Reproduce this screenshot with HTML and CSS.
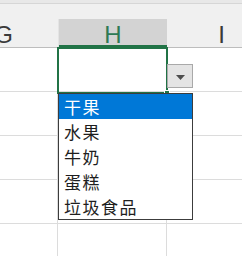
FILE: index.html
```html
<!DOCTYPE html>
<html lang="zh-CN">
<head>
  <meta charset="UTF-8" />
  <meta name="viewport" content="width=device-width, initial-scale=1.0">
  <title>数据验证下拉列表</title>
  <link rel="stylesheet" href="styles.css">
</head>
<body>
  <div class="sheet">
    <div class="top-strip"></div>

    <!-- Column headers -->
    <div class="col-header">
      <div class="col-cell">G</div>
      <div class="col-cell active">H</div>
      <div class="col-cell">I</div>
    </div>

    <!-- Cells -->
    <div class="grid">
      <div class="grid-row"><div class="cell"></div><div class="cell"></div><div class="cell"></div></div>
      <div class="grid-row"><div class="cell"></div><div class="cell"></div><div class="cell"></div></div>
      <div class="grid-row"><div class="cell"></div><div class="cell"></div><div class="cell"></div></div>
      <div class="grid-row"><div class="cell"></div><div class="cell"></div><div class="cell"></div></div>
      <div class="grid-row"><div class="cell"></div><div class="cell"></div><div class="cell"></div></div>
    </div>

    <!-- Active cell + validation dropdown -->
    <div class="selection">
      <span class="fill-handle"></span>
    </div>
    <button class="dropdown-btn" aria-label="open list">
      <svg width="9" height="5" viewBox="0 0 9 5"><path d="M0 0H9L4.5 5Z" fill="#4d4d4d"/></svg>
    </button>
    <ul class="dropdown-list">
      <li class="selected">干果</li>
      <li>水果</li>
      <li>牛奶</li>
      <li>蛋糕</li>
      <li>垃圾食品</li>
    </ul>
  </div>
</body>
</html>
```

FILE: styles.css
```css
:root {
  --header-bg: #f0f0f0;
  --header-active: #d3d3d3;
  --grid-line: #dcdcdc;
  --excel-green: #217346;
  --list-border: #3c3c3c;
  --list-select: #0078d7;
  --text-color: #1e1e1e;
}

* {
  box-sizing: border-box;
  margin: 0;
  padding: 0;
}

body {
  width: 242px;
  height: 256px;
  overflow: hidden;
  background: #ffffff;
  font-family: "Liberation Sans", Arial, sans-serif;
}

.sheet {
  position: relative;
  width: 242px;
  height: 256px;
  overflow: hidden;
}

.top-strip {
  height: 4px;
  background: #e8e8e8;
  border-bottom: 1px solid #d6d6d6;
}

/* column headers */
.col-header {
  display: flex;
  margin-left: -51px;
  padding-top: 15px;
  background: var(--header-bg);
  border-bottom: 1px solid #bdbdbd;
}

.col-cell {
  flex: 0 0 109px;
  height: 28px;
  text-align: center;
  font-size: 24px;
  line-height: 32px;
  color: #3a3a3a;
}

.col-cell.active {
  background: var(--header-active);
  color: #2e7a55;
  border-left: 1px solid #e4e4e4;
  box-shadow: inset 0 -2px 0 var(--excel-green);
}

/* cells */
.grid {
  margin-left: -51px;
}

.grid-row {
  display: flex;
  height: 44px;
  border-bottom: 1px solid var(--grid-line);
}

.cell {
  flex: 0 0 109px;
  border-right: 1px solid var(--grid-line);
}

/* overlays */
.selection {
  position: absolute;
  left: 57px;
  top: 47px;
  width: 111px;
  height: 47px;
  border: 2px solid var(--excel-green);
}

.fill-handle {
  position: absolute;
  right: -4px;
  bottom: -4px;
  width: 6px;
  height: 6px;
  background: var(--excel-green);
  border: 1px solid #ffffff;
}

.dropdown-btn {
  position: absolute;
  left: 167px;
  top: 64px;
  width: 26px;
  height: 24px;
  border: 1px solid #a9a9a9;
  background: #e4e4e4;
  display: flex;
  align-items: center;
  justify-content: center;
  padding-top: 2px;
}

.dropdown-list {
  position: absolute;
  left: 58px;
  top: 93px;
  width: 135px;
  height: 127px;
  list-style: none;
  background: #ffffff;
  border: 1px solid var(--list-border);
  font-family: "Noto Sans CJK SC", "Microsoft YaHei", sans-serif;
  font-size: 17px;
  letter-spacing: 1.5px;
  color: var(--text-color);
}

.dropdown-list li {
  height: 25px;
  line-height: 25px;
  padding-left: 5px;
}

.dropdown-list li.selected {
  background: var(--list-select);
  color: #ffffff;
}
```
